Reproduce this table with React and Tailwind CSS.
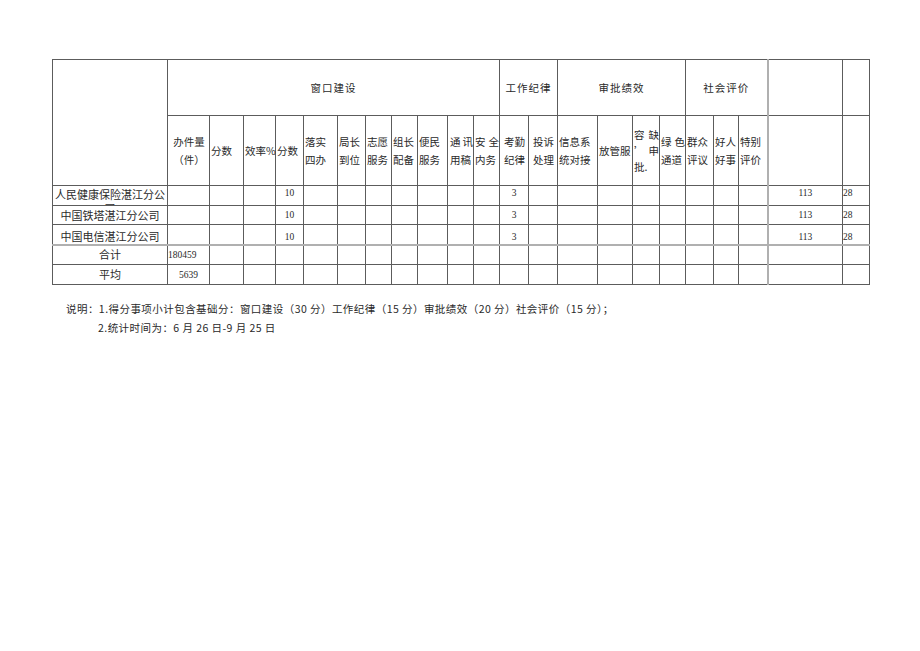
import React from 'react';

const colWidths = [
  'w-[115px]', 'w-[42px]', 'w-[34px]', 'w-[32px]', 'w-[28px]', 'w-[34px]', 'w-[28px]', 'w-[26px]',
  'w-[26px]', 'w-[30px]', 'w-[26px]', 'w-[26px]', 'w-[29px]', 'w-[29px]', 'w-[40px]', 'w-[35px]',
  'w-[27px]', 'w-[26px]', 'w-[28px]', 'w-[25px]', 'w-[29px]', 'w-[75px]', 'w-[27px]'
];

// second header row: lines per cell, align
const subHeaders = [
  { lines: ['办件量', '（件）'], align: 'text-center' },
  { lines: ['分数'] },
  { lines: ['效率%'] },
  { lines: ['分数'] },
  { lines: ['落实', '四办'] },
  { lines: ['局长', '到位'] },
  { lines: ['志愿', '服务'] },
  { lines: ['组长', '配备'] },
  { lines: ['便民', '服务'] },
  { lines: [['通', '讯'], '用稿'], pad: 'pl-[2px]' },
  { lines: [['安', '全'], '内务'] },
  { lines: ['考勤', '纪律'], align: 'text-center' },
  { lines: ['投诉', '处理'], align: 'text-center' },
  { lines: ['信息系', '统对接'] },
  { lines: ['放管服'] },
  { lines: [['容', '缺'], ['’', '申'], '批.'], tight: true },
  { lines: [['绿', '色'], '通道'] },
  { lines: ['群众', '评议'] },
  { lines: ['好人', '好事'] },
  { lines: ['特别', '评价'] },
];

const rows = [
  { name: '人民健康保险湛江分公司', wrap: true, score: '10', kq: '3', total: '113', rank: '28', valign: 'align-top' },
  { name: '中国铁塔湛江分公司', score: '10', kq: '3', total: '113', rank: '28', valign: 'align-middle' },
  { name: '中国电信湛江分公司', score: '10', kq: '3', total: '113', rank: '28', valign: 'align-bottom', lightBottom: true },
  { name: '合计', count: '180459', countAlign: 'text-left' },
  { name: '平均', count: '5639', countAlign: 'text-center' },
];

const cjk = "font-['Noto_Sans_CJK_SC',sans-serif]";
const num = "font-['Liberation_Serif','Noto_Sans_CJK_SC',serif]";
const cell = 'border border-[#5c5c5c] p-0';

const HeaderLine = ({ line }) =>
  Array.isArray(line) ? (
    <div className="flex justify-between">
      <span>{line[0]}</span>
      <span>{line[1]}</span>
    </div>
  ) : (
    <div className="whitespace-nowrap">{line}</div>
  );

const App = () => {
  return (
    <div className={`w-[920px] h-[651px] bg-white text-[#2a2a2a] ${cjk}`}>
      <div className="pt-[59px] pl-[52px]">
        <table className="table-fixed border-collapse w-[818px]">
          <colgroup>
            {colWidths.map((w, i) => (
              <col key={i} className={w} />
            ))}
          </colgroup>
          <tbody>
            <tr className="h-[56px]">
              <td rowSpan={2} className={cell}></td>
              <td colSpan={11} className={`${cell} text-center text-[10.5px] tracking-[1px]`}>窗口建设</td>
              <td colSpan={2} className={`${cell} text-center text-[10.5px] tracking-[1px]`}>工作纪律</td>
              <td colSpan={4} className={`${cell} text-center text-[10.5px] tracking-[1px]`}>审批绩效</td>
              <td colSpan={3} className={`${cell} text-center text-[10.5px] tracking-[1px]`}>社会评价</td>
              <td className={`${cell} border-l-2 border-l-[#b0b0b0]`}></td>
              <td className={cell}></td>
            </tr>
            <tr className="h-[70px]">
              {subHeaders.map((h, i) => (
                <td
                  key={i}
                  className={`${cell} ${h.align || 'text-left'} ${h.pad || 'pl-[1px]'} align-middle text-[10.5px] ${h.tight ? 'leading-[16px]' : 'leading-[18px]'}`}
                >
                  {h.lines.map((line, j) => (
                    <HeaderLine key={j} line={line} />
                  ))}
                </td>
              ))}
              <td className={`${cell} border-l-2 border-l-[#b0b0b0]`}></td>
              <td className={cell}></td>
            </tr>
            {rows.map((r, i) => (
              <tr key={i} className={i === 1 ? 'h-[19px]' : 'h-[20px]'}>
                <td className={`${cell} ${r.valign || 'align-middle'} text-center text-[11px] ${r.lightBottom ? 'border-b-2 border-b-[#b0b0b0]' : ''}`}>
                  {r.wrap ? (
                    <div className="h-[19px] overflow-hidden leading-[14px] pt-[1px] break-all">{r.name}</div>
                  ) : (
                    <div className="leading-[15px] whitespace-nowrap">{r.name}</div>
                  )}
                </td>
                {subHeaders.map((_, j) => {
                  let content = null;
                  let align = 'text-center';
                  if (j === 0 && r.count) {
                    content = r.count;
                    align = r.countAlign;
                  }
                  if (j === 3 && r.score) content = r.score;
                  if (j === 11 && r.kq) content = r.kq;
                  return (
                    <td
                      key={j}
                      className={`${cell} ${r.valign || 'align-middle'} ${align} ${num} text-[9.5px] leading-[14px] ${r.lightBottom ? 'border-b-2 border-b-[#b0b0b0]' : ''}`}
                    >
                      {content}
                    </td>
                  );
                })}
                <td className={`${cell} ${r.valign || 'align-middle'} text-center ${num} text-[9.5px] leading-[14px] border-l-2 border-l-[#b0b0b0] ${r.lightBottom ? 'border-b-2 border-b-[#b0b0b0]' : ''}`}>
                  {r.total}
                </td>
                <td className={`${cell} ${r.valign || 'align-middle'} text-left ${num} text-[9.5px] leading-[14px] ${r.lightBottom ? 'border-b-2 border-b-[#b0b0b0]' : ''}`}>
                  {r.rank}
                </td>
              </tr>
            ))}
          </tbody>
        </table>
      </div>

      {/* 说明 */}
      <div className="pt-[14px] pl-[66px] text-[10.5px] leading-[19px] tracking-[0.45px]">
        <div className="whitespace-nowrap">
          说明：1.得分事项小计包含基础分：窗口建设（30 分）工作纪律（15 分）审批绩效（20 分）社会评价（15 分）；
        </div>
        <div className="pl-[32px] whitespace-nowrap">2.统计时间为：6 月 26 日-9 月 25 日</div>
      </div>
    </div>
  );
};

export default App;
